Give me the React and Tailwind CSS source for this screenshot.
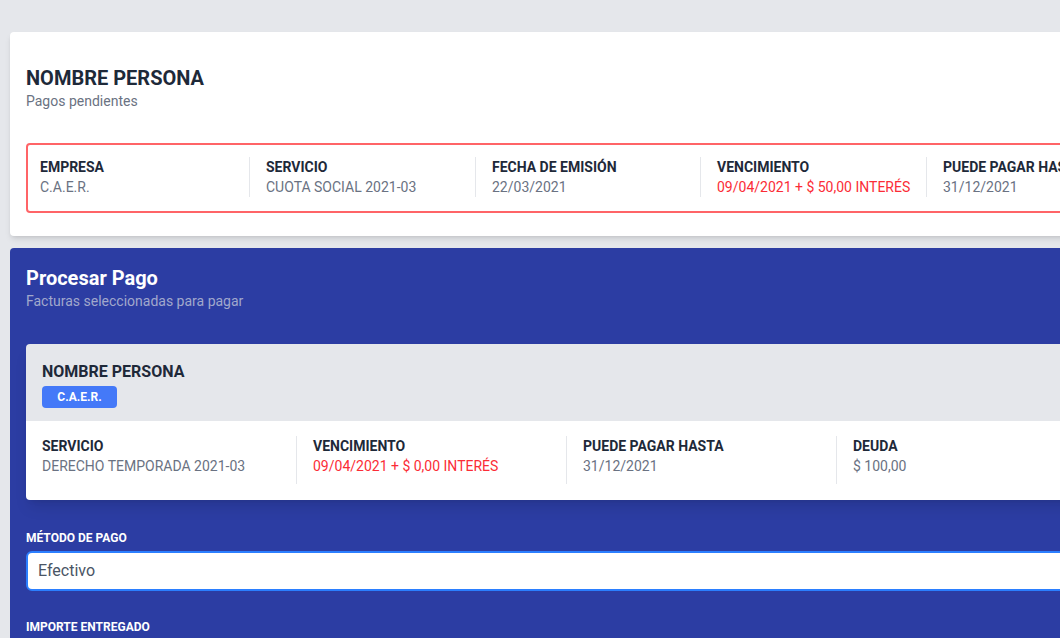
import React from "react";

const pendiente = [
  { label: "EMPRESA", value: "C.A.E.R." },
  { label: "SERVICIO", value: "CUOTA SOCIAL 2021-03" },
  { label: "FECHA DE EMISIÓN", value: "22/03/2021" },
  { label: "VENCIMIENTO", value: "09/04/2021 + $ 50,00 INTERÉS", red: true },
  { label: "PUEDE PAGAR HASTA", value: "31/12/2021" },
];

const anchos = ["w-[209px]", "w-[226px]", "w-[225px]", "w-[226px]", "w-[226px]"];

const seleccionada = [
  { label: "SERVICIO", value: "DERECHO TEMPORADA 2021-03" },
  { label: "VENCIMIENTO", value: "09/04/2021 + $ 0,00 INTERÉS", red: true },
  { label: "PUEDE PAGAR HASTA", value: "31/12/2021" },
  { label: "DEUDA", value: "$ 100,00" },
];

const Campo = ({ label, value, red }) => (
  <>
    <p className="text-sm font-bold leading-5 text-gray-800">{label}</p>
    <p
      className={`text-sm leading-5 ${red ? "text-red-500" : "text-gray-500"}`}
    >
      {value}
    </p>
  </>
);

export default function App() {
  return (
    <div
      className="w-full h-[638px] overflow-hidden bg-gray-200"
      style={{ fontFamily: "Roboto, 'Liberation Sans', sans-serif" }}
    >
      <div className="w-[1200px] pl-[10px] pt-8">
        {/* Pagos pendientes */}
        <div className="bg-white rounded shadow-md pt-8 pb-[23px] px-4">
          <h1 className="text-xl font-bold leading-7 text-gray-800">
            NOMBRE PERSONA
          </h1>
          <p className="-mt-px text-sm leading-5 text-gray-500">
            Pagos pendientes
          </p>
          <div className="mt-8 flex border-2 border-red-400 rounded pl-3 pt-3 pb-[14px]">
            {pendiente.map((c, i) => (
              <div
                key={c.label}
                className={`${anchos[i]} shrink-0 ${
                  i > 0 ? "border-l border-gray-200 pl-4" : ""
                }`}
              >
                <Campo {...c} />
              </div>
            ))}
          </div>
        </div>

        {/* Procesar pago */}
        <div className="mt-3 bg-[#2c3da3] rounded-t pt-4 px-4 pb-10">
          <h2 className="text-xl font-bold leading-7 text-white">
            Procesar Pago
          </h2>
          <p className="-mt-px text-sm leading-5 text-[#a1a8cc]">
            Facturas seleccionadas para pagar
          </p>

          <div className="mt-[33px] rounded shadow-lg overflow-hidden">
            <div className="bg-gray-200 pt-4 pb-[13px] px-4">
              <p className="text-base font-bold leading-6 text-gray-800">
                NOMBRE PERSONA
              </p>
              <span className="inline-flex items-center justify-center w-[75px] h-[22px] rounded bg-[#4479f8] text-xs font-bold text-white">
                C.A.E.R.
              </span>
            </div>
            <div className="bg-white flex py-4">
              {seleccionada.map((c, i) => (
                <div
                  key={c.label}
                  className={`w-[270px] h-12 shrink-0 px-4 -mt-px ${
                    i > 0 ? "border-l border-gray-200" : ""
                  }`}
                >
                  <Campo {...c} />
                </div>
              ))}
            </div>
          </div>

          <label className="block mt-[30px] text-xs font-bold leading-4 text-white">
            MÉTODO DE PAGO
          </label>
          <div className="mt-[5px] h-10 flex items-center bg-white border-2 border-blue-500 rounded-md pl-2.5 text-base text-gray-600">
            Efectivo
          </div>

          <label className="block mt-7 text-xs font-bold leading-4 text-white">
            IMPORTE ENTREGADO
          </label>
        </div>
      </div>
    </div>
  );
}
